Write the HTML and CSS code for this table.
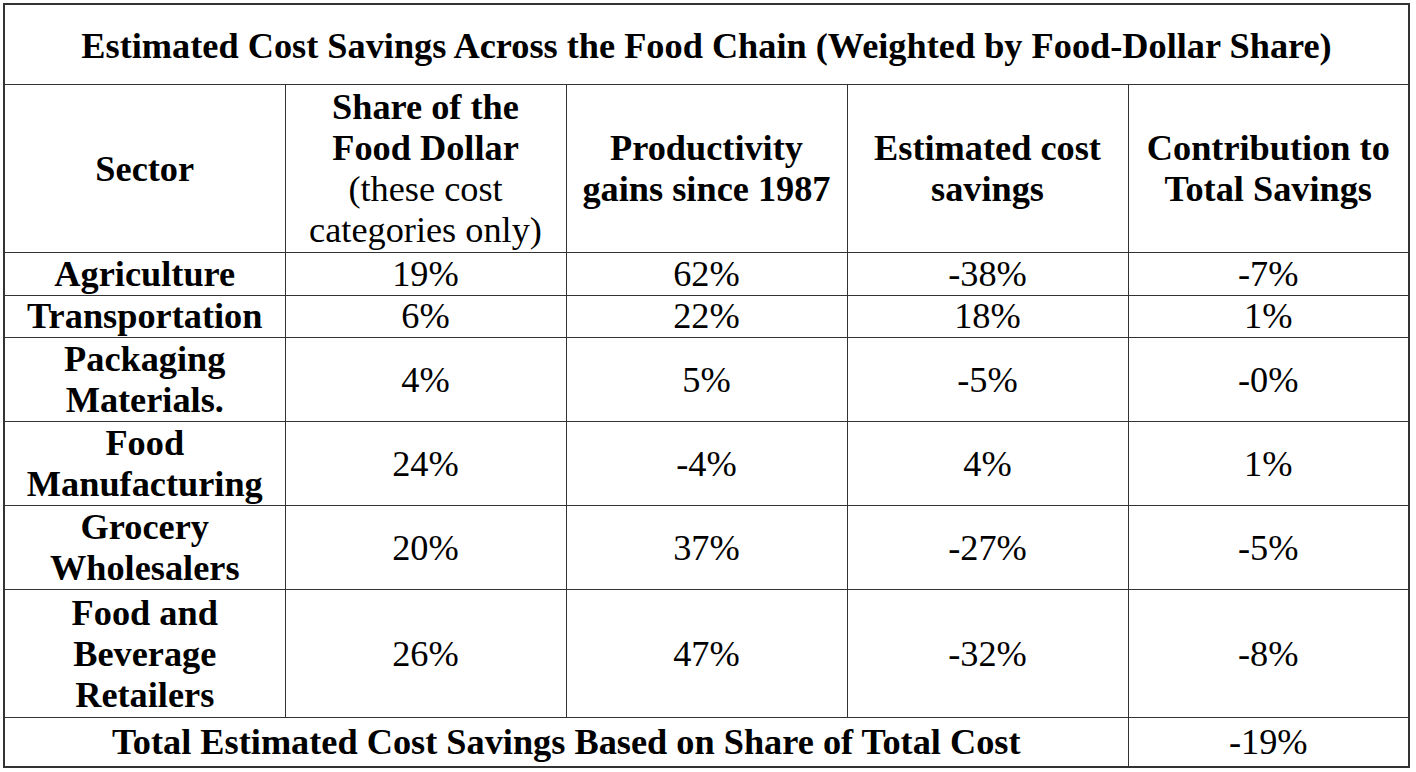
FILE: index.html
```html
<!DOCTYPE html>
<html>
<head>
<meta charset="utf-8">
<link rel="stylesheet" href="styles.css">
</head>
<body>
<table class="savings">
  <colgroup>
    <col class="c"><col class="c"><col class="c"><col class="c"><col class="c">
  </colgroup>
  <tr class="title-row"><th colspan="5">Estimated Cost Savings Across the Food Chain (Weighted by Food-Dollar Share)</th></tr>
  <tr class="head-row">
    <th>Sector</th>
    <th>Share of the<br>Food Dollar<br><span class="reg">(these cost<br>categories only)</span></th>
    <th>Productivity<br>gains since 1987</th>
    <th>Estimated cost<br>savings</th>
    <th>Contribution to<br>Total Savings</th>
  </tr>
  <tr><th>Agriculture</th><td>19%</td><td>62%</td><td>-38%</td><td>-7%</td></tr>
  <tr class="tight-row"><th>Transportation</th><td>6%</td><td>22%</td><td>18%</td><td>1%</td></tr>
  <tr><th>Packaging<br>Materials.</th><td>4%</td><td>5%</td><td>-5%</td><td>-0%</td></tr>
  <tr><th>Food<br>Manufacturing</th><td>24%</td><td>-4%</td><td>4%</td><td>1%</td></tr>
  <tr><th>Grocery<br>Wholesalers</th><td>20%</td><td>37%</td><td>-27%</td><td>-5%</td></tr>
  <tr class="tall-row"><th>Food and<br>Beverage<br>Retailers</th><td>26%</td><td>47%</td><td>-32%</td><td>-8%</td></tr>
  <tr class="total-row"><th colspan="4">Total Estimated Cost Savings Based on Share of Total Cost</th><td>-19%</td></tr>
</table>
</body>
</html>
```
FILE: styles.css
```css
html, body {
  margin: 0;
  padding: 0;
  background: #ffffff;
}
body {
  padding: 3px 0 0 3px;
}
.savings {
  border-collapse: collapse;
  table-layout: fixed;
  width: 1407px;
  font-family: "Liberation Serif", "Times New Roman", serif;
  font-size: 36.3px;
  line-height: 41px;
  color: #000;
  border: 2px solid #333333;
}
.savings .c {
  width: 281px;
}
.savings th,
.savings td {
  border: 1px solid #333333;
  padding: 1px 0 0 0;
  text-align: center;
  vertical-align: middle;
}
.savings th {
  font-weight: bold;
}
.savings td {
  font-weight: normal;
}
.reg {
  font-weight: normal;
}
.title-row th {
  height: 76px;
  padding-top: 3px;
}
.head-row th {
  height: 166px;
}
.tight-row th,
.tight-row td {
  padding-top: 0;
}
.tall-row th,
.tall-row td {
  height: 126px;
}
.total-row th,
.total-row td {
  height: 47px;
}
```
